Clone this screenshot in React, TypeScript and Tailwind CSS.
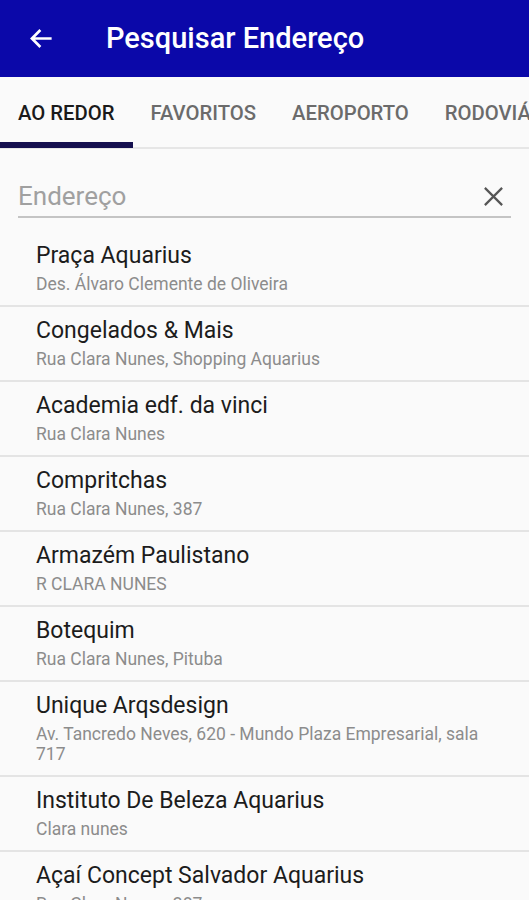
const TABS = ['AO REDOR', 'FAVORITOS', 'AEROPORTO', 'RODOVIÁRIA'];

const PLACES = [
  { name: 'Praça Aquarius', address: 'Des. Álvaro Clemente de Oliveira' },
  { name: 'Congelados & Mais', address: 'Rua Clara Nunes, Shopping Aquarius' },
  { name: 'Academia edf. da vinci', address: 'Rua Clara Nunes' },
  { name: 'Compritchas', address: 'Rua Clara Nunes, 387' },
  { name: 'Armazém Paulistano', address: 'R CLARA NUNES' },
  { name: 'Botequim', address: 'Rua Clara Nunes, Pituba' },
  { name: 'Unique Arqsdesign', address: 'Av. Tancredo Neves, 620 - Mundo Plaza Empresarial, sala 717' },
  { name: 'Instituto De Beleza Aquarius', address: 'Clara nunes' },
  { name: 'Açaí Concept Salvador Aquarius', address: 'Rua Clara Nunes, 387' },
];

export default function App() {
  return (
    <div className="h-[900px] w-[529px] overflow-hidden bg-[#fafafa] font-['Roboto',sans-serif]">
      <header className="flex h-[77px] items-center bg-[#0b08a9] text-white">
        <svg className="ml-[28px] h-[27px] w-[27px]" viewBox="0 0 24 24" fill="none" stroke="white" strokeWidth="2.4">
          <path d="M21 12H4M11 4.5 3.5 12l7.5 7.5" />
        </svg>
        <h1 className="ml-[51px] text-[29px] font-medium">Pesquisar Endereço</h1>
      </header>

      <nav className="flex h-[72px] border-b-2 border-[#e6e6e6] whitespace-nowrap">
        {TABS.map((tab, i) => (
          <div
            key={tab}
            className={`relative flex shrink-0 items-center px-[18px] pt-[2px] text-[20.3px] font-medium ${
              i === 0 ? 'text-[#1a1a1a]' : 'text-[#6b6b6b]'
            }`}
          >
            {tab}
            {i === 0 && <span className="absolute bottom-[-1px] left-0 right-0 h-[6px] bg-[#15104f]" />}
          </div>
        ))}
      </nav>

      <div className="mx-[18px] mt-[28px] flex h-[41px] items-center border-b-2 border-[#c4c4c4]">
        <span className="flex-1 text-[26px] text-[#a0a0a0]">Endereço</span>
        <svg className="mr-[6px] h-[23px] w-[23px]" viewBox="0 0 24 24" stroke="#555" strokeWidth="2.3">
          <path d="M3 3l18 18M21 3 3 21" />
        </svg>
      </div>

      <ul className="mt-[14px]">
        {PLACES.map((p) => (
          <li key={p.name} className="border-b-2 border-[#e4e4e4] pb-[11px] pl-[36px] pr-[40px] pt-[10px]">
            <div className="text-[23px] leading-[28px] text-[#1c1c1c]">{p.name}</div>
            <div className="mt-[4px] text-[17.5px] leading-[20px] text-[#8c8c8c]">{p.address}</div>
          </li>
        ))}
      </ul>
    </div>
  );
}
